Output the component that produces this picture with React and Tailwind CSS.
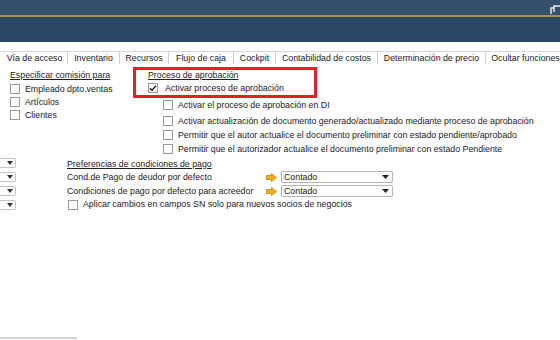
import React from 'react';

const tabs = [
  { label: 'Vía de acceso', w: 'w-[66px]' },
  { label: 'Inventario', w: 'w-[52px]' },
  { label: 'Recursos', w: 'w-[49px]' },
  { label: 'Flujo de caja', w: 'w-[65px]' },
  { label: 'Cockpit', w: 'w-[42px]' },
  { label: 'Contabilidad de costos', w: 'w-[102px]' },
  { label: 'Determinación de precio', w: 'w-[108px]' },
  { label: 'Ocultar funciones', w: 'w-[80px]' },
];

const Check = ({ checked }) => (
  <span className="flex h-[10px] w-[10px] shrink-0 items-center justify-center border border-[#9a9a9a] bg-white">
    {checked && (
      <svg width="8" height="8" viewBox="0 0 8 8">
        <path d="M1 4.2 L3 6.2 L7 1.6" fill="none" stroke="#111" strokeWidth="1.3" />
      </svg>
    )}
  </span>
);

const CheckRow = ({ label, checked, className = '' }) => (
  <div className={`flex items-center gap-[5px] ${className}`}>
    <Check checked={checked} />
    <span>{label}</span>
  </div>
);

const Arrow = () => (
  <svg width="11" height="9" viewBox="0 0 11 9" className="shrink-0">
    <path d="M0.5 2.5 H5.5 V0.5 L10.5 4.5 L5.5 8.5 V6.5 H0.5 Z" fill="#f2b11c" stroke="#c48400" strokeWidth="0.8" />
  </svg>
);

const Select = ({ value }) => (
  <div className="flex h-[12px] w-[112px] items-center justify-between rounded-[2px] border border-[#b4b4b4] bg-white pl-[2px] pr-[3px]">
    <span>{value}</span>
    <svg width="7" height="4" viewBox="0 0 7 4"><path d="M0 0 H7 L3.5 4 Z" fill="#222" /></svg>
  </div>
);

const MiniSelect = () => (
  <div className="flex h-[10px] w-[16px] items-center justify-end rounded-r-[2px] border border-l-0 border-[#c4c4c4] bg-white pr-[2px]">
    <svg width="6" height="4" viewBox="0 0 6 4"><path d="M0 0 H6 L3 4 Z" fill="#333" /></svg>
  </div>
);

export default function App() {
  return (
    <div className="flex h-[340px] w-[560px] flex-col overflow-hidden bg-white text-[8.8px] leading-none text-[#222]" style={{ fontFamily: '"Liberation Sans", Arial, sans-serif' }}>
      {/* cabecera */}
      <div className="relative">
        <div className="h-[15px] bg-[#35506c]" />
        <div className="h-[2px] bg-[#a8924a]" />
        <div className="h-[25px] bg-[#2b4765]" />
        <svg width="10" height="10" viewBox="0 0 10 10" className="absolute right-0 top-[5px]">
          <path d="M1 9 V3 H4 V1 H10 M4 3 V7" fill="none" stroke="#e8eef4" strokeWidth="1.4" />
        </svg>
      </div>

      {/* pestañas */}
      <div className="mt-[9px] flex h-[13px] items-center border-t border-[#d8d8d8] pl-[2px]">
        {tabs.map((t) => (
          <div key={t.label} className={`flex h-full shrink-0 items-center justify-center whitespace-nowrap border-r border-[#cfcfcf] ${t.w}`}>
            {t.label}
          </div>
        ))}
      </div>

      {/* bloque superior */}
      <div className="mt-[3px] flex">
        <div className="ml-[10px] w-[123px] pt-[4px]">
          <div className="h-[11px] underline">Especificar comisión para</div>
          <div className="flex flex-col gap-[3px] pt-[2px]">
            <CheckRow label="Empleado dpto.ventas" />
            <CheckRow label="Artículos" />
            <CheckRow label="Clientes" />
          </div>
        </div>
        <div>
          <div className="h-[31px] w-[184px] border-[3px] border-[#ec1c24] pl-[12px] pt-[1px]">
            <div className="h-[12px] underline">Proceso de aprobación</div>
            <CheckRow label="Activar proceso de aprobación" checked className="gap-[7px]" />
          </div>
          <div className="ml-[30px] flex flex-col">
            <CheckRow label="Activar el proceso de aprobación en DI" className="h-[14px] gap-[4px]" />
            <CheckRow label="Activar actualización de documento generado/actualizado mediante proceso de aprobación" className="mt-[2px] h-[14px] gap-[4px]" />
            <CheckRow label="Permitir que el autor actualice el documento preliminar con estado pendiente/aprobado" className="h-[14px] gap-[4px]" />
            <CheckRow label="Permitir que el autorizador actualice el documento preliminar con estado Pendiente" className="h-[14px] gap-[4px]" />
          </div>
        </div>
      </div>

      {/* condiciones de pago */}
      <div className="mt-[2px] flex">
        <div className="flex flex-col gap-[4px]">
          <MiniSelect />
          <MiniSelect />
          <MiniSelect />
          <MiniSelect />
        </div>
        <div className="ml-[51px] flex flex-col">
          <div className="flex h-[12px] items-center underline">Preferencias de condiciones de pago</div>
          <div className="flex h-[14px] items-center">
            <span className="w-[199px]">Cond.de Pago de deudor por defecto</span>
            <Arrow />
            <span className="ml-[4px]"><Select value="Contado" /></span>
          </div>
          <div className="flex h-[14px] items-center">
            <span className="w-[199px]">Condiciones de pago por defecto para acreedor</span>
            <Arrow />
            <span className="ml-[4px]"><Select value="Contado" /></span>
          </div>
          <CheckRow label="Aplicar cambios en campos SN solo para nuevos socios de negocios" className="ml-[1px] h-[13px]" />
        </div>
      </div>

      <div className="mt-auto mb-[1px] h-[2px] w-[77px] bg-[#d2d2d2]" />
    </div>
  );
}
